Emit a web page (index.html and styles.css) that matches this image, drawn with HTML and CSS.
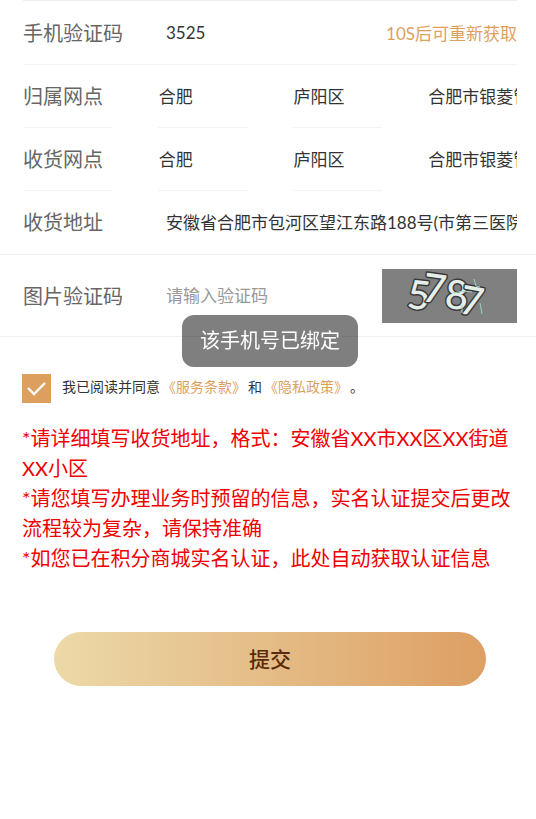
FILE: index.html
```html
<!DOCTYPE html>
<html lang="zh-CN">
<head>
  <meta charset="UTF-8">
  <meta name="viewport" content="width=device-width, initial-scale=1.0">
  <title>实名认证</title>
  <link rel="stylesheet" href="styles.css">
</head>
<body>
  <form class="auth-form">
    <div class="fields">
      <div class="row">
        <label class="label" for="sms">手机验证码</label>
        <input class="input" type="text" id="sms" value="3525">
        <button class="resend" type="button">10S后可重新获取</button>
      </div>

      <div class="row-grid">
        <label class="label cell" for="branch-city">归属网点</label>
        <input class="input cell" type="text" id="branch-city" value="合肥" readonly>
        <input class="input cell" type="text" aria-label="归属区" value="庐阳区" readonly>
        <input class="input cell" type="text" aria-label="归属门店" value="合肥市银菱管" readonly>
      </div>

      <div class="row-grid">
        <label class="label cell" for="ship-city">收货网点</label>
        <input class="input cell" type="text" id="ship-city" value="合肥" readonly>
        <input class="input cell" type="text" aria-label="收货区" value="庐阳区" readonly>
        <input class="input cell" type="text" aria-label="收货门店" value="合肥市银菱管" readonly>
      </div>

      <div class="row row-last">
        <label class="label" for="address">收货地址</label>
        <input class="input" type="text" id="address" value="安徽省合肥市包河区望江东路188号(市第三医院)">
      </div>
    </div>

    <div class="captcha-row">
      <label class="label" for="captcha">图片验证码</label>
      <input class="input" type="text" id="captcha" placeholder="请输入验证码">
      <svg class="captcha" viewBox="0 0 135 54" role="img" aria-label="图片验证码">
        <rect width="135" height="54" fill="#808080"/>
        <g class="captcha-digits">
          <text transform="translate(24 39) rotate(6)">5</text>
          <text transform="translate(39 32) rotate(8)">7</text>
          <text transform="translate(62 39) rotate(5)">8</text>
          <text transform="translate(76 44) rotate(10)">7</text>
        </g>
        <g fill="none" stroke="#9fcfc2" stroke-width="1">
          <path d="M92 10l2 7 4 1"/>
          <path d="M98 34l2 11"/>
          <path d="M71 24l9-2 10 1"/>
          <path d="M80 36v8"/>
        </g>
      </svg>
    </div>

    <div class="agree">
      <input class="check" type="checkbox" id="agree" checked>
      <p class="agree-text"><label for="agree">我已阅读并同意</label><a href="#terms">《服务条款》</a>和<a href="#privacy">《隐私政策》</a>。</p>
    </div>

    <div class="notes">
      <p>*请详细填写收货地址，格式：安徽省XX市XX区XX街道XX小区</p>
      <p>*请您填写办理业务时预留的信息，实名认证提交后更改流程较为复杂，请保持准确</p>
      <p>*如您已在积分商城实名认证，此处自动获取认证信息</p>
    </div>

    <button class="submit" type="submit">提交</button>
  </form>

  <div class="toast" role="status">该手机号已绑定</div>
</body>
</html>
```

FILE: styles.css
```css
* {
  box-sizing: border-box;
}

body {
  margin: 0;
  font-family: Lato, "Noto Sans CJK SC", sans-serif;
  font-size: 17px;
  text-spacing-trim: space-all;
  color: #333;
  background-color: #fff;
}

p {
  margin: 0;
}

input, button {
  font-family: inherit;
  font-size: inherit;
  color: inherit;
}

.fields {
  padding: 0 19px 0 23px;
  border-bottom: 1px solid #eee;
}

.row {
  display: flex;
  align-items: center;
  height: 63px;
}

.row:first-child {
  height: 65px;
  border-top: 1px solid #eee;
  border-bottom: 1px solid #f4f4f4;
}

.row-last {
  padding-bottom: 2px;
}

.row-grid {
  display: grid;
  grid-template-columns: repeat(4, 1fr);
  column-gap: 45px;
  height: 63px;
}

.label {
  flex: none;
  width: 142px;
  font-size: 20px;
  color: #666;
}

.input {
  flex: 1;
  width: 100%;
  min-width: 0;
  height: 100%;
  padding: 0 0 1px 1px;
  border: none;
  border-radius: 0;
  outline: none;
  background: none;
}

.input::placeholder {
  color: #999;
}

.cell {
  width: auto;
  line-height: 62px;
  border-bottom: 1px solid #f4f4f4;
}

.cell:last-child {
  border-bottom-color: transparent;
}

.resend {
  padding: 0 0 1px;
  border: none;
  background: none;
  color: #dda15e;
}

.captcha-row {
  display: flex;
  align-items: center;
  height: 82px;
  padding: 0 19px 0 23px;
  border-bottom: 1px solid #f0f0f0;
}

.captcha {
  flex: none;
  width: 135px;
  height: 54px;
}

.captcha-digits {
  font-family: Lato, sans-serif;
  font-size: 40px;
  font-weight: 500;
  fill: #e4eeea;
  stroke: #3a3a3a;
  stroke-width: 3px;
  stroke-linejoin: round;
  paint-order: stroke;
}

.agree {
  display: flex;
  align-items: flex-start;
  gap: 11px;
  padding: 37px 19px 0 22px;
}

.check {
  appearance: none;
  flex: none;
  width: 29px;
  height: 29px;
  margin: 0;
  background: #dd9f5e url("data:image/svg+xml,%3Csvg xmlns='http://www.w3.org/2000/svg' viewBox='0 0 29 29'%3E%3Cpath d='M6 14l6 6L23 9' fill='none' stroke='%23fff' stroke-width='2.4'/%3E%3C/svg%3E") center / contain no-repeat;
}

.check:not(:checked) {
  background: #fff;
  border: 1px solid #dd9f5e;
}

.agree-text {
  font-size: 14px;
  line-height: 25px;
}

.agree-text a {
  margin: 0 2px;
  color: #dd9f5e;
  text-decoration: none;
}

.notes {
  padding: 20px 19px 0 22px;
  font-size: 20px;
  line-height: 30px;
  color: #f00000;
}

.submit {
  display: block;
  width: calc(100% - 104px);
  height: 54px;
  margin: 59px 50px 0 54px;
  padding: 0 0 2px;
  border: none;
  border-radius: 27px;
  background: linear-gradient(90deg, #ecd9a8, #dd9f64);
  font-size: 21px;
  font-weight: 500;
  color: #5a2a0b;
}

.toast {
  position: fixed;
  top: 315px;
  left: 270px;
  transform: translateX(-50%);
  padding: 10px 18px 12px;
  border-radius: 12px;
  background-color: rgba(0, 0, 0, 0.5);
  font-size: 20px;
  line-height: 30px;
  white-space: nowrap;
  color: #fff;
}
```
